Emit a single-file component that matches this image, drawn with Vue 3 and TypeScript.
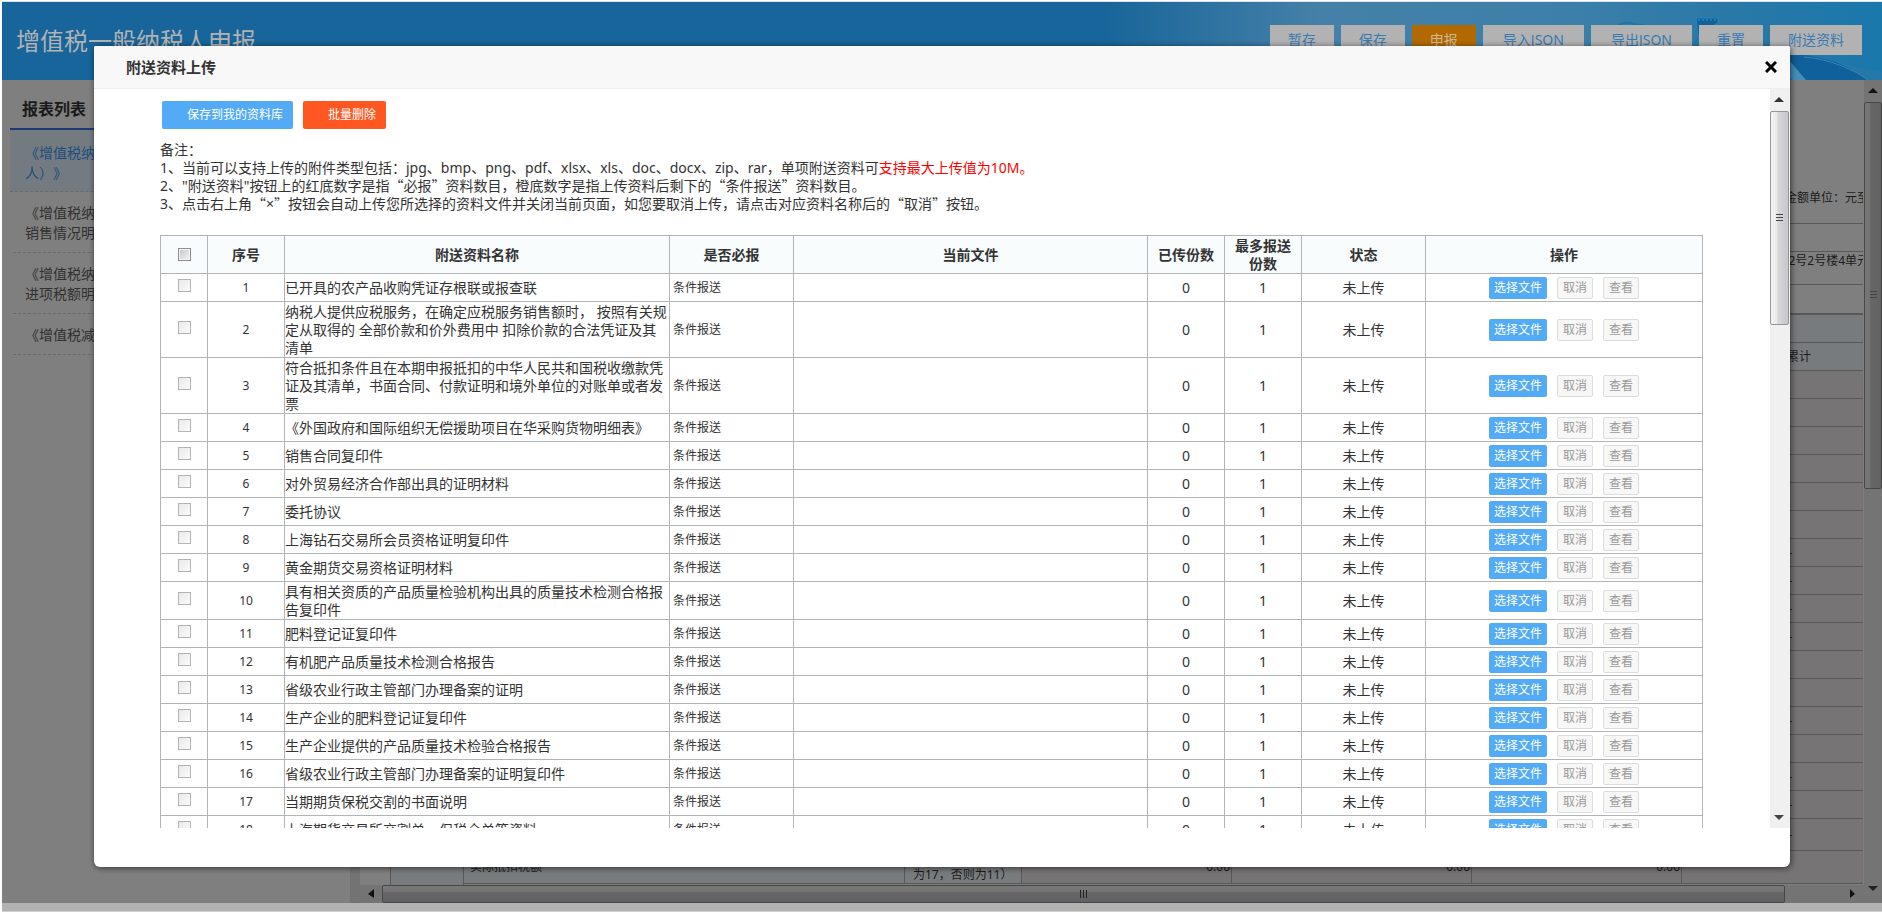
<script setup lang="ts">
import { ref } from 'vue'

interface Attachment {
  id: number
  name: string
  lines: 'one' | 'two' | 'three'
}

const names: string[] = [
  '已开具的农产品收购凭证存根联或报查联',
  '纳税人提供应税服务，在确定应税服务销售额时， 按照有关规定从取得的 全部价款和价外费用中 扣除价款的合法凭证及其清单',
  '符合抵扣条件且在本期申报抵扣的中华人民共和国税收缴款凭证及其清单，书面合同、付款证明和境外单位的对账单或者发票',
  '《外国政府和国际组织无偿援助项目在华采购货物明细表》',
  '销售合同复印件',
  '对外贸易经济合作部出具的证明材料',
  '委托协议',
  '上海钻石交易所会员资格证明复印件',
  '黄金期货交易资格证明材料',
  '具有相关资质的产品质量检验机构出具的质量技术检测合格报告复印件',
  '肥料登记证复印件',
  '有机肥产品质量技术检测合格报告',
  '省级农业行政主管部门办理备案的证明',
  '生产企业的肥料登记证复印件',
  '生产企业提供的产品质量技术检验合格报告',
  '省级农业行政主管部门办理备案的证明复印件',
  '当期期货保税交割的书面说明',
  '上海期货交易所交割单、保税仓单等资料',
]

const rows: Attachment[] = names.map((name, i) => ({
  id: i + 1,
  name,
  lines: name.length > 54 ? 'three' : name.length > 27 ? 'two' : 'one',
}))

const checked = ref<number[]>([])
function toggleAll(e: Event) {
  checked.value = (e.target as HTMLInputElement).checked ? rows.map((r) => r.id) : []
}

const tools = [
  { label: '暂存', kind: '' },
  { label: '保存', kind: '' },
  { label: '申报', kind: 'submit' },
  { label: '导入JSON', kind: 'wide' },
  { label: '导出JSON', kind: 'wide' },
  { label: '重置', kind: '' },
  { label: '附送资料', kind: '' },
]

const reports = [
  '《增值税纳税申报表（适用于增值税一般纳税\n人）》',
  '《增值税纳税申报表附列资料（一）（本期\n销售情况明细）》',
  '《增值税纳税申报表附列资料（二）（本期\n进项税额明细）》',
  '《增值税减免税申报明细表》',
]

const sheet: { text: string; cls: string }[] = [
  { text: '金额单位：元至', cls: 'unit' },
  { text: '', cls: '' },
  { text: '2号2号楼4单元', cls: 'address' },
  { text: '', cls: 'thick' },
  { text: '', cls: 'label' },
  { text: '累计', cls: 'label total' },
  ...[0, 0, 0, 0, 0, 0, 1, 1, 1, 1, 0, 0, 1, 0, 1, 1].map((d) => ({
    text: d ? '--' : '',
    cls: 'value',
  })),
  { text: '--', cls: 'value tall' },
]
</script>

<template>
  <div class="page">
    <header class="banner">
      <svg class="scene" viewBox="0 0 782 78" preserveAspectRatio="xMaxYMin slice" aria-hidden="true">
        <defs>
          <linearGradient id="sky" x1="0" x2="1">
            <stop offset="0" stop-color="#17659a" />
            <stop offset=".28" stop-color="#4580a8" />
            <stop offset=".6" stop-color="#3c80a9" />
            <stop offset=".8" stop-color="#2a78a8" />
            <stop offset="1" stop-color="#1a78aa" />
          </linearGradient>
        </defs>
        <rect width="782" height="78" fill="url(#sky)" />
        <path d="M490 44 L515 38 L555 38 L592 42 L594 50 L598 16 L618 15 L619 24 L634 38 L670 42 L690 52 L782 70 V78 H490Z" fill="#2479aa" />
        <path d="M518 24q4-4 12-3l8 2q4-1 8 1" fill="none" stroke="#1d76a9" stroke-width="2" />
        <path d="M596 16h22v6h-3v12h-17z" fill="#0e629b" stroke="#2b87b5" />
        <path d="M598 18h18" stroke="#3d91b9" stroke-dasharray="2 2" />
        <path d="M682 50 Q720 54 740 62 Q756 69 768 78 H700 Z" fill="#10609b" />
        <path d="M682 50 L706 78 H692 L682 62Z" fill="#438fb9" />
        <path d="M704 55 Q722 56 742 64 Q758 70 768 78" fill="none" stroke="#3587b5" />
      </svg>
      <h1>增值税一般纳税人申报</h1>
      <nav class="tools">
        <button v-for="t in tools" :key="t.label" type="button" :class="t.kind">{{ t.label }}</button>
      </nav>
    </header>

    <div class="workspace">
      <aside class="sidebar">
        <h2>报表列表</h2>
        <a v-for="(r, i) in reports" :key="i" href="#" :class="{ active: i === 0 }">{{ r }}</a>
      </aside>
      <main class="sheet-area">
        <div class="sheet-main">
          <div class="sheet">
            <div v-for="(s, i) in sheet" :key="i" class="line" :class="s.cls"><span>{{ s.text }}</span></div>
            <div class="last">
              <div class="gutter"></div>
              <div class="group"></div>
              <div class="item">实际抵扣税额</div>
              <div class="formula">为17，否则为11）</div>
              <div class="num n1">0.00</div>
              <div class="num n2">0.00</div>
              <div class="num n3">0.00</div>
              <div class="num rest"></div>
            </div>
          </div>
          <div class="hbar dim">
            <svg class="arrow" viewBox="0 0 18 18"><path d="M12 4v9L6 9z" fill="#111" /></svg>
            <div class="thumb"><i class="grip"></i></div>
            <div class="space"></div>
            <svg class="arrow" viewBox="0 0 18 18"><path d="M6 4v9l5-4z" fill="#111" /></svg>
          </div>
        </div>
        <div class="vbar dim">
          <svg class="arrow" viewBox="0 0 18 22"><path d="M4 13h10L9 8z" fill="#111" /></svg>
          <div class="thumb"><i class="grip"></i></div>
          <div class="space"></div>
          <svg class="arrow end" viewBox="0 0 18 22"><path d="M4 5h10l-5 5z" fill="#222" /></svg>
        </div>
      </main>
    </div>
    <div class="strip"></div>

    <section class="dialog" role="dialog" aria-labelledby="dialog-title">
      <div class="dialog-head">
        <h2 id="dialog-title">附送资料上传</h2>
        <button type="button" class="close" aria-label="关闭">
          <svg viewBox="0 0 12 12"><path d="M1 1l10 10M11 1L1 11" stroke="#000" stroke-width="3" /></svg>
        </button>
      </div>
      <div class="dialog-body">
        <div class="content">
          <div class="actions">
            <button type="button" class="save">保存到我的资料库</button>
            <button type="button" class="remove">批量删除</button>
          </div>
          <div class="notes">
            <p>备注：</p>
            <p>1、当前可以支持上传的附件类型包括：jpg、bmp、png、pdf、xlsx、xls、doc、docx、zip、rar，单项附送资料可<em>支持最大上传值为10M。</em></p>
            <p>2、"附送资料"按钮上的红底数字是指<q>必报</q>资料数目，橙底数字是指上传资料后剩下的<q>条件报送</q>资料数目。</p>
            <p>3、点击右上角<q>×</q>按钮会自动上传您所选择的资料文件并关闭当前页面，如您要取消上传，请点击对应资料名称后的<q>取消</q>按钮。</p>
          </div>
          <table>
            <colgroup>
              <col class="c-check" /><col class="c-small" /><col class="c-name" /><col class="c-mid" /><col />
              <col class="c-small" /><col class="c-small" /><col class="c-mid" /><col class="c-ops" />
            </colgroup>
            <thead>
              <tr>
                <th><input type="checkbox" aria-label="全选" @change="toggleAll" /></th>
                <th>序号</th>
                <th>附送资料名称</th>
                <th>是否必报</th>
                <th>当前文件</th>
                <th>已传份数</th>
                <th>最多报送份数</th>
                <th>状态</th>
                <th>操作</th>
              </tr>
            </thead>
            <tbody>
              <tr v-for="r in rows" :key="r.id" :class="r.lines">
                <td class="pick"><input v-model="checked" type="checkbox" :value="r.id" :aria-label="r.name" /></td>
                <td class="index">{{ r.id }}</td>
                <td class="name">{{ r.name }}</td>
                <td class="need">条件报送</td>
                <td></td>
                <td>0</td>
                <td>1</td>
                <td>未上传</td>
                <td>
                  <div class="ops">
                    <button type="button" class="choose">选择文件</button>
                    <button type="button" disabled>取消</button>
                    <button type="button" disabled>查看</button>
                  </div>
                </td>
              </tr>
            </tbody>
          </table>
        </div>
        <div class="vbar light">
          <svg class="arrow" viewBox="0 0 18 22"><path d="M4 13h10L9 8z" fill="#333" /></svg>
          <div class="thumb"><i class="grip"></i></div>
          <div class="space"></div>
          <svg class="arrow end" viewBox="0 0 18 22"><path d="M4 9h10l-5 5z" fill="#444" /></svg>
        </div>
      </div>
    </section>
  </div>
</template>

<style>
body {
  margin: 0;
  background: #fff;
}
</style>

<style scoped>
* {
  box-sizing: border-box;
}
.page {
  position: relative;
  display: flex;
  flex-direction: column;
  height: 100vh;
  padding: 1px 0 1px 2px;
  overflow: hidden;
  color: #333;
  font-family: "Noto Sans", "Noto Sans CJK SC", sans-serif;
  font-size: 14px;
  line-height: 18px;
  text-spacing-trim: space-all;
}
button {
  margin: 0;
  padding: 0;
  border: 0;
  font: inherit;
  cursor: pointer;
}
h1,
h2,
p {
  margin: 0;
}

.banner {
  position: relative;
  display: flex;
  flex: none;
  justify-content: space-between;
  height: 79px;
  padding: 23px 20px 0 14px;
  border-top: 1px solid #dde3e6;
  background: #17659a;
}
.scene {
  position: absolute;
  top: 0;
  right: 0;
  width: 782px;
  height: 78px;
}
h1 {
  color: #b2b2b2;
  font-size: 24px;
  font-weight: 400;
  line-height: 32px;
}
.tools {
  position: relative;
  display: flex;
  gap: 7px;
}
.tools button {
  height: 30px;
  padding: 0 18px;
  background: #b2b2b2;
  color: #3a7ab2;
  line-height: 30px;
}
.tools .wide {
  padding: 0 20px;
}
.tools .submit {
  background: #b26a00;
  color: #d0b896;
}

.workspace {
  display: flex;
  flex: 1;
  min-height: 0;
}
.sidebar {
  flex: none;
  width: 358px;
  padding: 12px 20px 0 8px;
  border-right: 10px solid #737373;
  background: #7f7f7f;
}
.sidebar h2 {
  height: 38px;
  padding-left: 12px;
  border-bottom: 2px solid #1d3a73;
  color: #1a1a1a;
  font-size: 16px;
  line-height: 34px;
}
.sidebar a {
  display: block;
  margin-left: 3px;
  padding: 11px 0 9px 12px;
  border-bottom: 1px dashed #6a6a6a;
  color: #303030;
  line-height: 20px;
  text-decoration: none;
  white-space: pre-line;
}
.sidebar a.active {
  margin-left: 0;
  padding: 13px 0 8px 15px;
  background: #737b81;
  color: #1c4d7c;
}
.sheet-area {
  display: flex;
  flex: 1;
  min-width: 0;
  background: #7f7f7f;
}
.sheet-main {
  display: flex;
  flex: 1;
  flex-direction: column;
  min-width: 0;
}
.sheet {
  flex: 1;
  min-height: 0;
  margin-right: 1px;
  overflow: hidden;
  color: #1c1c1c;
  font-size: 12px;
}
.line {
  display: flex;
  flex: none;
  justify-content: flex-end;
  align-items: center;
  height: 28px;
  border-bottom: 1px solid #585858;
  white-space: nowrap;
}
.line.unit {
  align-items: flex-end;
  height: 144px;
  padding-bottom: 16px;
}
.line.address {
  align-items: flex-start;
  height: 33px;
}
.line.unit span,
.line.address span {
  margin-right: -6px;
}
.line.thick {
  height: 30px;
  border-bottom-width: 2px;
}
.line.label {
  background: #787b7d;
}
.line.total {
  padding-right: 52px;
}
.line.value {
  padding-right: 71px;
  background: #777475;
}
.line.tall {
  height: 32px;
}
.last {
  display: flex;
  height: 35px;
  line-height: 16px;
}
.last > div {
  height: 33px;
  flex: none;
  padding: 8px 0 0 6px;
  border-right: 1px solid #585858;
  border-bottom: 1px solid #585858;
  background: #797c7e;
}
.last .gutter {
  width: 31px;
  height: 35px;
  border-bottom: 0;
  background: #7f7f7f;
}
.last .group {
  width: 73px;
  height: 35px;
  border-bottom: 0;
}
.last .item {
  flex: 1;
}
.last .formula {
  width: 117px;
  padding: 16px 0 0 8px;
}
.last .num {
  padding-right: 1px;
  background: #777475;
  text-align: right;
}
.last .n1 {
  width: 210px;
}
.last .n2 {
  width: 240px;
}
.last .n3 {
  width: 210px;
}
.last .rest {
  width: 181px;
  border-right: 0;
}
.strip {
  flex: none;
  height: 9px;
  border-bottom: 1px solid #cfcfcf;
  background: #b2b2b2;
}

.vbar {
  display: flex;
  flex: none;
  flex-direction: column;
  width: 20px;
}
.hbar {
  display: flex;
  flex: none;
  height: 18px;
}
.arrow {
  flex: none;
  width: 18px;
  height: 22px;
}
.hbar .arrow {
  width: 22px;
  height: 18px;
}
.thumb {
  display: flex;
  flex: none;
  align-items: center;
  justify-content: center;
  border-radius: 2px;
}
.space {
  flex: 1;
}
.dim {
  background: #747474;
}
.vbar.dim {
  width: 18px;
}
.vbar.dim .thumb {
  height: 47%;
  border: 1px solid #474747;
  background: linear-gradient(90deg, #777, #737373 30%, #676767 35%, #626264);
}
.hbar .thumb {
  width: 1403px;
  max-width: 94%;
  border: 1px solid #474747;
  background: linear-gradient(#787878, #747474 35%, #676769 40%, #616163);
}
.light {
  background: #f0f0f0;
}
.light .thumb {
  width: 19px;
  height: 29%;
  border: 1px solid #95959a;
  background: linear-gradient(90deg, #f4f4f4, #eaeaea 35%, #d8d8db 40%, #c6c6cb);
}
.grip {
  width: 7px;
  height: 8px;
  background: repeating-linear-gradient(#444 0 1px, transparent 1px 3px);
}
.hbar .grip {
  background: repeating-linear-gradient(90deg, #222 0 1px, transparent 1px 3px);
}

.dialog {
  position: absolute;
  top: 46px;
  right: 92px;
  bottom: 46px;
  left: 94px;
  display: flex;
  flex-direction: column;
  padding-bottom: 39px;
  border-radius: 2px 2px 6px 6px;
  background: #fff;
  box-shadow: 1px 1px 6px rgba(0, 0, 0, 0.6);
}
.dialog-head {
  display: flex;
  flex: none;
  align-items: center;
  justify-content: space-between;
  height: 43px;
  padding: 0 13px 0 32px;
  border-bottom: 1px solid #eee;
  border-radius: 2px 2px 0 0;
  background: #f8f8f8;
}
.dialog-head h2 {
  font-size: 15px;
}
.close {
  display: flex;
  width: 12px;
  height: 12px;
  background: none;
}
.dialog-body {
  display: flex;
  flex: 1;
  min-height: 0;
}
.content {
  flex: 1;
  min-width: 0;
  padding: 12px 67px 0 66px;
  overflow: hidden;
}
.actions {
  display: flex;
  gap: 10px;
  padding-left: 2px;
}
.actions button {
  height: 28px;
  padding: 0 10px 0 25px;
  border-radius: 2px;
  color: #fff;
  font-size: 12px;
  line-height: 28px;
}
.save {
  background: #53abf5;
}
.remove {
  background: #ff5722;
}
.notes {
  margin: 12px 0 22px;
}
.notes em {
  color: #f00;
  font-style: normal;
}
.notes q {
  quotes: none;
}
.notes q::before,
.notes q::after {
  font-family: "Noto Sans CJK SC", sans-serif;
  line-height: 0;
}
.notes q::before {
  content: "“";
}
.notes q::after {
  content: "”";
}

table {
  width: 100%;
  border-collapse: collapse;
  table-layout: fixed;
}
.c-check {
  width: 47px;
}
.c-small {
  width: 77px;
}
.c-name {
  width: 385px;
}
.c-mid {
  width: 124px;
}
.c-ops {
  width: 277px;
}
th,
td {
  padding: 0 4px;
  border: 1px solid #b2b5b7;
  text-align: center;
}
th {
  height: 38px;
  background: #f8fcfd;
}
tr.one {
  height: 28px;
}
tr.two {
  height: 38px;
}
tr.three {
  height: 56px;
}
td.name {
  padding: 0;
  text-align: left;
}
td.need {
  padding: 0 3px;
  font-size: 12px;
  text-align: left;
}
td.index {
  font-size: 12px;
}
td.pick {
  padding-bottom: 4px;
}
input {
  display: block;
  width: 13px;
  height: 13px;
  margin: 0 auto;
  border: 1px solid #b4b4b4;
  appearance: none;
  background: linear-gradient(135deg, #e9e9e9, #fafafa);
}
th input {
  border-color: #8e8f8f;
  background: linear-gradient(135deg, #c3c6cc, #f4f4f4);
  box-shadow: inset 0 0 0 1px #f4f4f4;
}
input:checked {
  background: #53abf5;
}
.ops {
  display: flex;
  gap: 10px;
  justify-content: center;
}
.ops button {
  width: 36px;
  height: 22px;
  border: 1px solid #ddd;
  border-radius: 2px;
  background: #f7f7f7;
  color: #999;
  font-size: 12px;
  line-height: 20px;
}
.ops .choose {
  width: 58px;
  border-color: #53abf5;
  background: #53abf5;
  color: #fff;
}
</style>
